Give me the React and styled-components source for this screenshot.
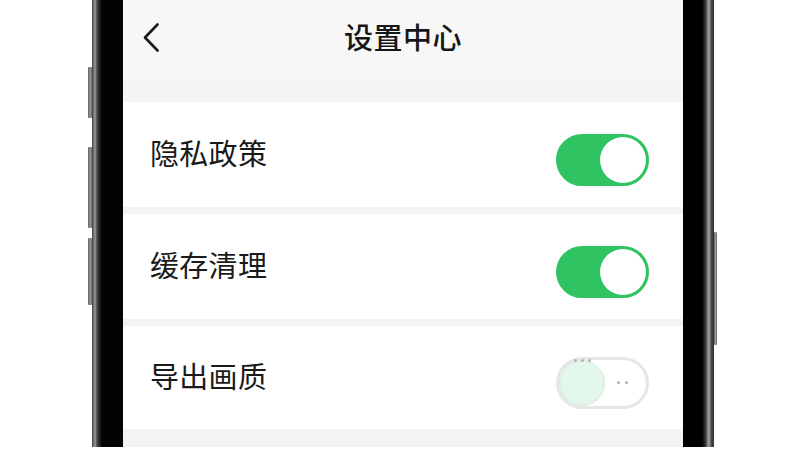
import styled, { createGlobalStyle } from "styled-components";

const GlobalStyle = createGlobalStyle`
  html, body {
    margin: 0;
    padding: 0;
    background: #ffffff;
    font-family: "Noto Sans CJK SC", "Noto Sans", sans-serif;
  }
`;

const Page = styled.div`
  width: 800px;
  height: 450px;
  overflow: hidden;
  background: #ffffff;
  display: flex;
  padding-left: 88px;
  box-sizing: border-box;
`;

const Rail = styled.div`
  width: ${(p) => (p.$right ? 3 : 4)}px;
  flex: none;
  display: flex;
  flex-direction: column;
`;

const SideButton = styled.div`
  height: ${(p) => p.$height}px;
  margin-top: ${(p) => p.$mt}px;
  border-radius: 1px;
  background: linear-gradient(to right, #5a5a5a, #9a9a9a, #666);
`;

const Phone = styled.div`
  width: 622px;
  height: 447px;
  flex: none;
  box-sizing: border-box;
  padding: 0 31px;
  background: linear-gradient(
    to right,
    #3e3e3e 0,
    #7c7c7c 2px,
    #9a9a9a 3px,
    #4a4a4a 5px,
    #1c1c1c 8px,
    #030303 10px,
    #000 calc(100% - 12px),
    #2a2a2a calc(100% - 9px),
    #8a8a8a calc(100% - 6px),
    #a8a8a8 calc(100% - 5px),
    #505050 calc(100% - 3px),
    #2e2e2e 100%
  );
`;

const Screen = styled.div`
  height: 100%;
  background: #f3f3f3;
  display: flex;
  flex-direction: column;
  overflow: hidden;
`;

const Header = styled.div`
  height: 80px;
  flex: none;
  background: #f7f7f7;
  display: grid;
  grid-template-columns: 1fr auto 1fr;
  align-items: center;
  padding: 0 20px 8px;
  box-sizing: border-box;
`;

const BackButton = styled.div`
  width: 16px;
  height: 29px;
  display: flex;
  margin-top: 2px;
`;

const Title = styled.h1`
  margin: 0;
  font-size: 29px;
  font-weight: 500;
  color: #161616;
  letter-spacing: 0.5px;
`;

const Band = styled.div`
  height: 22px;
  flex: none;
  background: #f4f4f4;
`;

const List = styled.div`
  display: flex;
  flex-direction: column;
  gap: 7px;
`;

const Row = styled.div`
  height: ${(p) => p.$height}px;
  background: #ffffff;
  display: flex;
  align-items: center;
  justify-content: space-between;
  padding: 0 34px 0 27px;
`;

const Label = styled.span`
  font-size: 29px;
  color: #1a1a1a;
  letter-spacing: 0.3px;
  padding-bottom: 6px;
`;

const Track = styled.div`
  width: 93px;
  height: 52px;
  margin-top: 10px;
  box-sizing: border-box;
  border-radius: 26px;
  display: flex;
  flex-direction: ${(p) => (p.$on ? "row-reverse" : "row")};
  background: ${(p) => (p.$on ? "#2fc362" : "#ffffff")};
  border: 3px solid ${(p) => (p.$on ? "#2fc362" : "#e6e6e6")};
`;

const Knob = styled.div`
  width: 46px;
  height: 46px;
  flex: none;
  border-radius: 50%;
  box-sizing: border-box;
  display: flex;
  justify-content: center;
  align-items: flex-start;
  gap: 4px;
  background: ${(p) => (p.$on ? "#ffffff" : "#e2f6e9")};
  border: ${(p) => (p.$on ? "none" : "1px solid #d6ebdc")};
`;

const Dots = styled.div`
  flex: 1;
  display: flex;
  justify-content: center;
  align-items: center;
  gap: 5px;
  padding-right: 6px;
`;

const Dot = styled.span`
  width: 3px;
  height: 3px;
  border-radius: 50%;
  background: #b0b0b0;
  margin-top: ${(p) => (p.$up ? "-2px" : "0")};
`;

const Toggle = ({ on }) => (
  <Track $on={on}>
    <Knob $on={on}>
      {!on && (
        <>
          <Dot $up />
          <Dot $up />
          <Dot $up />
        </>
      )}
    </Knob>
    {!on && (
      <Dots>
        <Dot />
        <Dot />
      </Dots>
    )}
  </Track>
);

const rows = [
  { label: "隐私政策", on: true, height: 105 },
  { label: "缓存清理", on: true, height: 105 },
  { label: "导出画质", on: false, height: 103 },
];

export default function App() {
  return (
    <Page>
      <GlobalStyle />
      <Rail>
        <SideButton $mt={67} $height={51} />
        <SideButton $mt={29} $height={81} />
        <SideButton $mt={10} $height={67} />
      </Rail>
      <Phone>
        <Screen>
          <Header>
            <BackButton>
              <svg width="16" height="29" viewBox="0 0 16 29" fill="none">
                <polyline
                  points="14.5,1.5 2,14.5 14.5,27.5"
                  stroke="#1a1a1a"
                  strokeWidth="2.6"
                  strokeLinecap="round"
                  strokeLinejoin="round"
                />
              </svg>
            </BackButton>
            <Title>设置中心</Title>
          </Header>
          <Band />
          <List>
            {rows.map((r) => (
              <Row key={r.label} $height={r.height}>
                <Label>{r.label}</Label>
                <Toggle on={r.on} />
              </Row>
            ))}
          </List>
        </Screen>
      </Phone>
      <Rail $right>
        <SideButton $mt={232} $height={113} />
      </Rail>
    </Page>
  );
}
